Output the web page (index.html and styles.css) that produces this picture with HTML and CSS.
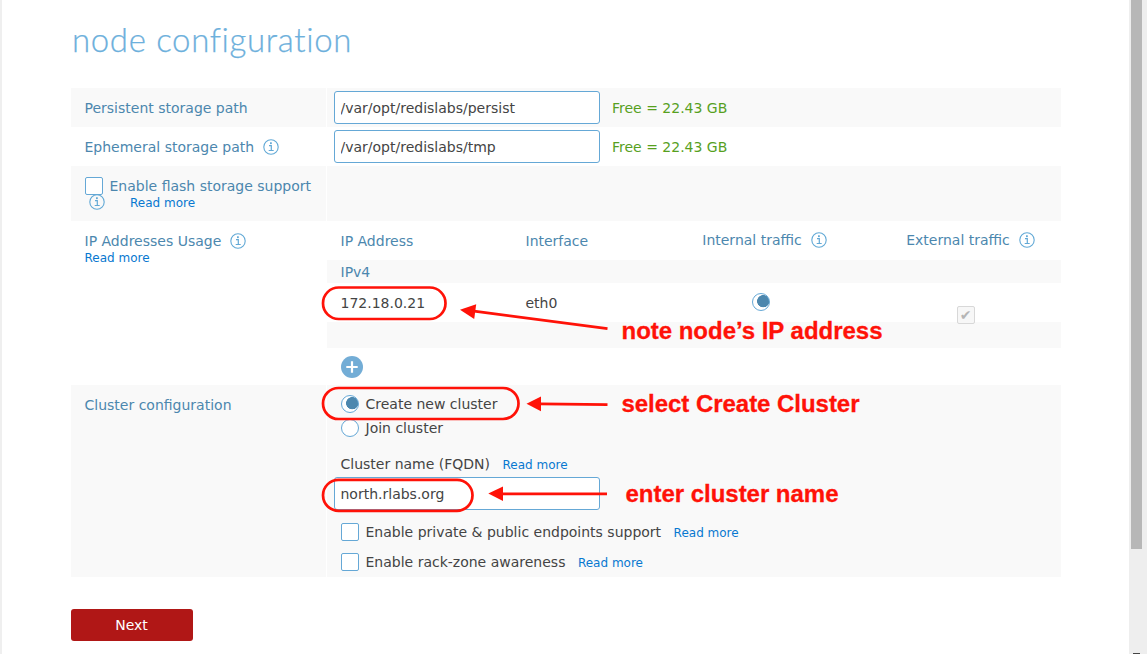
FILE: index.html
```html
<!DOCTYPE html>
<html lang="en">
<head>
<meta charset="utf-8">
<title>node configuration</title>
<link rel="stylesheet" href="styles.css">
</head>
<body>
<svg class="defs" width="0" height="0">
  <symbol id="info" viewBox="0 0 16 16">
    <circle cx="8" cy="8" r="7.2" fill="none" stroke="currentColor" stroke-width="1.1"/>
    <path d="M6 6.7H8.3V11.4M5.7 11.5H10.7" fill="none" stroke="currentColor" stroke-width="1.2"/>
    <rect x="7" y="3.3" width="1.8" height="1.8" fill="currentColor"/>
  </symbol>
</svg>
<div class="page">
  <main class="content">
    <h1 class="title"><span class="title-text">node configuration</span></h1>
    <section class="form">
      <div class="row shaded path-row">
        <div class="label">Persistent storage path</div>
        <div class="value"><input class="field" value="/var/opt/redislabs/persist"><span class="free">Free = 22.43 GB</span></div>
      </div>
      <div class="row path-row">
        <div class="label">Ephemeral storage path<svg class="info"><use href="#info"/></svg></div>
        <div class="value"><input class="field" value="/var/opt/redislabs/tmp"><span class="free">Free = 22.43 GB</span></div>
      </div>
      <div class="row shaded flash-row">
        <div class="label flash">
          <div class="option"><span class="box"></span>Enable flash storage support</div>
          <div class="flash-help"><svg class="info"><use href="#info"/></svg><a class="more">Read more</a></div>
        </div>
        <div class="value"></div>
      </div>
      <div class="row ip-row">
        <div class="label ip-label">
          <div class="ip-title">IP Addresses Usage<svg class="info"><use href="#info"/></svg></div>
          <a class="more">Read more</a>
        </div>
        <div class="addresses">
          <div class="grid head">
            <span>IP Address</span><span>Interface</span>
            <span class="center internal">Internal traffic<svg class="info"><use href="#info"/></svg></span>
            <span class="center">External traffic<svg class="info"><use href="#info"/></svg></span>
          </div>
          <div class="group">IPv4</div>
          <div class="grid entry">
            <span>172.18.0.21</span><span>eth0</span>
            <span class="traffic-radio"><span class="radio on"></span></span>
            <span class="traffic-check"><span class="box disabled">✔</span></span>
          </div>
          <div class="group blank"></div>
          <div class="add-row"><svg class="add" viewBox="0 0 22 22"><circle cx="11" cy="11" r="11" fill="#73add6"/><path d="M11 5.3V16.7M5.3 11H16.7" stroke="#fff" stroke-width="2.2"/></svg></div>
        </div>
      </div>
      <div class="row shaded cluster-row">
        <div class="label cluster-label">Cluster configuration</div>
        <div class="cluster">
          <div class="option create"><span class="radio on"></span>Create new cluster</div>
          <div class="option join"><span class="radio"></span>Join cluster</div>
          <div class="option fqdn">Cluster name (FQDN)<a class="more">Read more</a></div>
          <input class="field" value="north.rlabs.org">
          <div class="option endpoints"><span class="box"></span>Enable private &amp; public endpoints support<a class="more">Read more</a></div>
          <div class="option rack"><span class="box"></span>Enable rack-zone awareness<a class="more">Read more</a></div>
        </div>
      </div>
    </section>
    <button class="next">Next</button>
  </main>
  <div class="scrollbar"><div class="thumb"></div><div class="corner"></div></div>
  <svg class="notes" viewBox="0 0 1147 654">
    <g fill="none" stroke="#ff1208" stroke-width="2.7">
      <rect x="323" y="287.5" width="122.5" height="31.5" rx="15.7"/>
      <rect x="323" y="388" width="195.5" height="31" rx="15.5"/>
      <rect x="323" y="479.8" width="149.5" height="31" rx="15.5"/>
      <path d="M474 311.2L607.5 328.6M540 403.8L607.5 404.6M502 493.8H607"/>
    </g>
    <g fill="#ff1208">
      <path d="M460 309.8L476.2 304.2L474.2 319Z"/>
      <path d="M526.5 403.8L541 396.5V411.3Z"/>
      <path d="M488.3 493.6L503 486.4V501Z"/>
      <text class="note" x="621.5" y="338.6" textLength="261">note node’s IP address</text>
      <text class="note" x="621.5" y="411.6" textLength="238">select Create Cluster</text>
      <text class="note" x="625.5" y="501.7" textLength="213">enter cluster name</text>
    </g>
  </svg>
</div>
</body>
</html>
```
FILE: styles.css
```css
* { box-sizing: border-box; }
body { margin: 0; overflow: hidden; background: #fff; }
.defs { position: absolute; }
.page {
  position: relative;
  display: flex;
  justify-content: space-between;
  width: 1147px;
  height: 654px;
  border-left: 2px solid #efefef;
  font: 14px/18px "DejaVu Sans", sans-serif;
  color: #444;
}
.content { margin-left: 69px; width: 990px; }
.title {
  margin: 0;
  height: 88px;
  padding: 17px 0 0 1px;
  font: 300 33px/44px Lato, sans-serif;
  color: #6db0dc;
}
.title-text { display: inline-block; letter-spacing: 0.65px; white-space: nowrap; -webkit-text-stroke: 0.25px #6db0dc; }
.row { display: grid; grid-template-columns: 255px 734px; column-gap: 1px; color: #4c87ae; }
.shaded > * { background: #f9f9f9; }
.label { padding-left: 13.5px; }
.value { display: flex; align-items: center; padding-left: 7px; }
.path-row { height: 39px; }
.path-row .label { display: flex; align-items: center; padding-top: 1px; }
.field {
  display: block;
  width: 266px;
  height: 33px;
  padding: 0 5.5px;
  border: 1px solid #65a8d6;
  border-radius: 3px;
  background: #fff;
  color: #444;
  font: 14px "DejaVu Sans", sans-serif;
}
.free { margin-left: 12px; padding-top: 1px; color: #57a01e; }
.info { flex: none; width: 16px; height: 16px; margin-left: 9px; color: #62a9d6; vertical-align: -3px; }
.more { font-size: 12px; line-height: 16px; color: #0878d0; }
.option { display: flex; align-items: center; }
.box, .radio { flex: none; width: 18px; height: 18px; border: 1px solid #65a8d6; background: #fff; margin-right: 6.5px; }
.box { border-radius: 2px; }
.radio { border-radius: 50%; }
.radio.on { background: radial-gradient(circle at 10.2px 7.2px, #4c87ae 5.8px, #fff 6.4px); }
.flash-row { height: 55px; }
.flash { padding-top: 11px; }
.flash .option { height: 18px; }
.flash .box { margin-right: 7px; }
.flash-help { display: flex; align-items: center; height: 14px; }
.flash-help .info { margin: 0 25px 0 4.5px; }
.flash-help .more { padding-top: 2px; }
.path-row .info, .ip-title .info { margin-bottom: 1px; }
.ip-row { height: 164px; }
.ip-label { padding-top: 11px; }
.ip-label .more { display: block; }
.ip-title { display: flex; align-items: center; height: 18px; }
.addresses { display: flex; flex-direction: column; }
.grid { display: grid; grid-template-columns: 185px 133px 208px 208px; padding-left: 13.5px; width: 734px; }
.head { height: 39px; padding-top: 11px; }
.head .center { margin-top: -1px; text-align: center; white-space: nowrap; }
.head .internal { padding-left: 4px; }
.group { height: 23px; padding: 3px 13.5px; background: #f9f9f9; }
.entry { position: relative; z-index: 1; height: 39px; padding-top: 11px; color: #444; }
.traffic-radio, .traffic-check { display: flex; }
.traffic-radio { padding-left: 93px; margin-top: -1px; }
.traffic-check { padding: 12px 0 0 90px; }
.box.disabled { margin: 0; border-color: #d8d8d8; background: #f7f7f7; color: #b5b5b5; font-size: 14px; line-height: 16px; text-align: center; }
.blank { height: 26px; }
.add-row { padding: 8px 14px; }
.add { display: block; width: 22px; height: 22px; }
.cluster-row { height: 192px; }
.cluster-label { padding-top: 11px; }
.cluster { padding: 10px 0 0 7px; color: #444; }
.cluster .option { padding-left: 7px; height: 18px; }
.join { margin-top: 6px; }
.cluster .fqdn { margin: 18px 0 4px; padding-left: 6.5px; }
.cluster .more { margin-left: 12.5px; padding-top: 1px; }
.endpoints { margin-top: 13px; }
.rack { margin-top: 12px; }
.next {
  display: block;
  width: 122px;
  height: 32px;
  margin-top: 32px;
  padding: 0 1px 0 0;
  border: 0;
  border-radius: 3px;
  background: #b01716;
  color: #fff;
  font: 14px "DejaVu Sans", sans-serif;
}
.scrollbar { display: flex; flex-direction: column; justify-content: space-between; width: 18px; padding-left: 2px; background: #eee; }
.thumb { width: 11px; height: 549px; background: #b7b7b7; }
.corner { width: 7px; height: 1px; margin-left: 2px; background: #444; }
.notes { position: absolute; z-index: 2; left: -2px; top: 0; width: 1147px; height: 654px; pointer-events: none; }
.note { font: bold 24px "Liberation Sans", sans-serif; stroke: #ff1208; stroke-width: 0.3px; }
```
